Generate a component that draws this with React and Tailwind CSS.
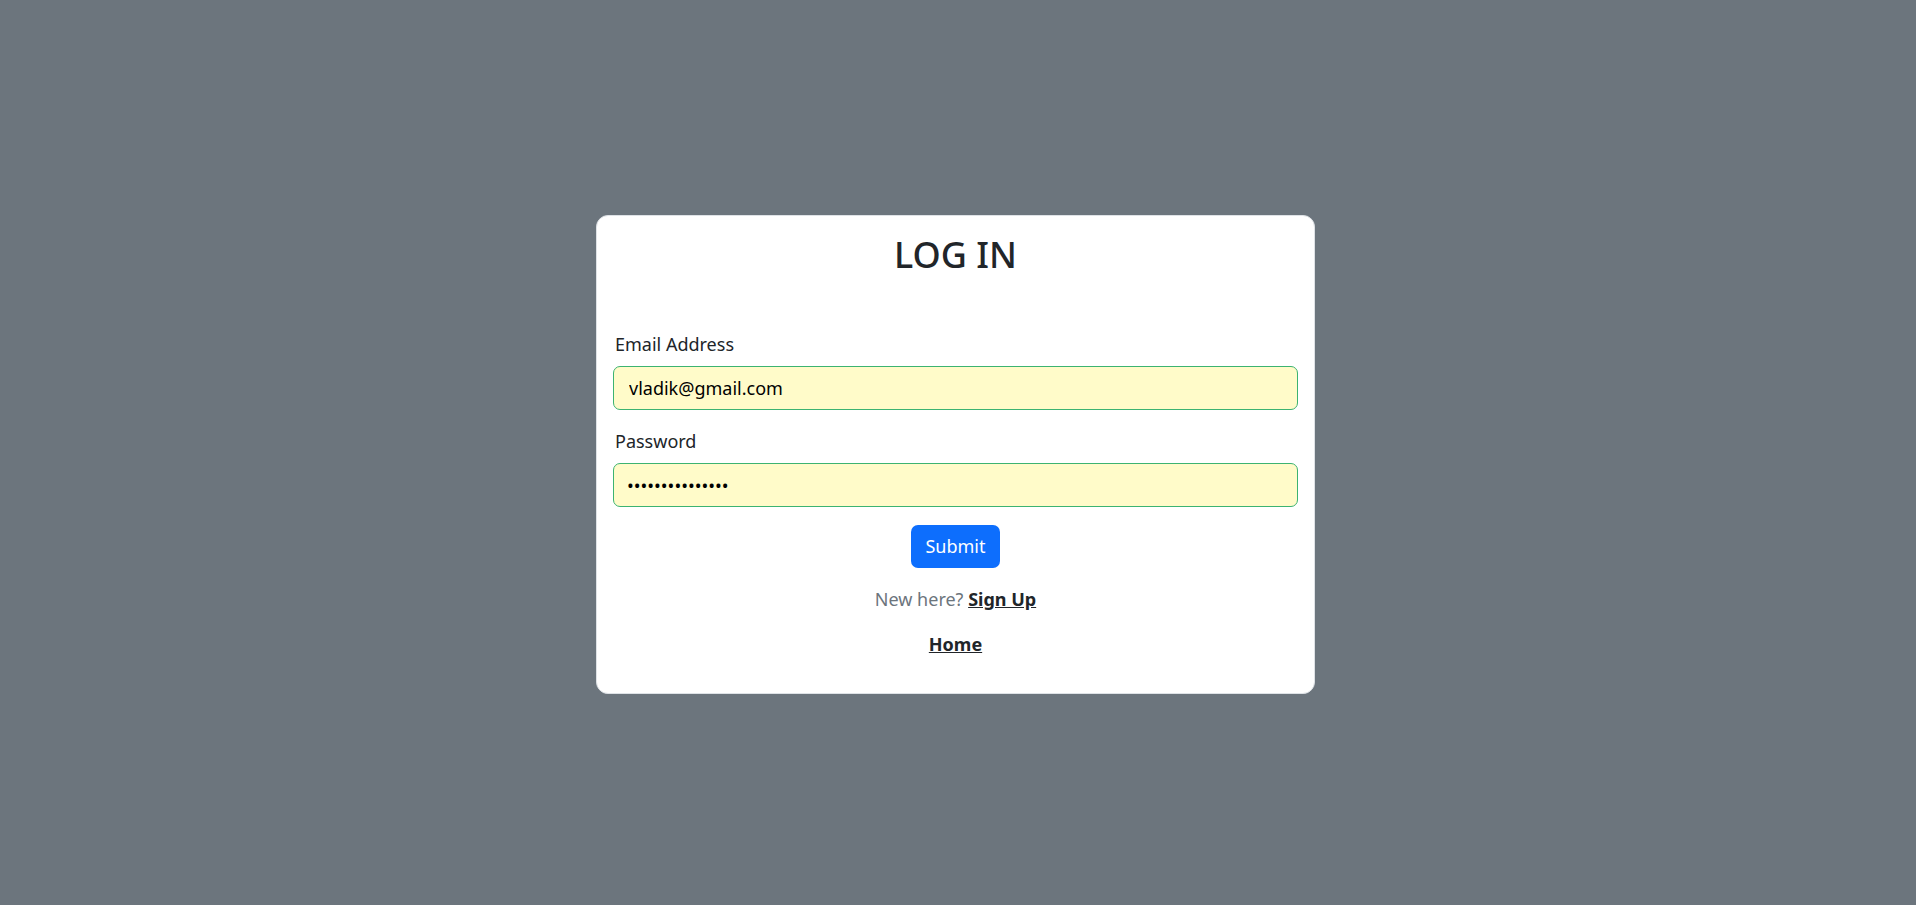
import React, { useState } from "react";

export default function App() {
  const [email, setEmail] = useState("vladik@gmail.com");
  const [password, setPassword] = useState("vladikpassword1");

  return (
    <div
      className="min-h-screen w-full bg-[#6c757d] flex items-center justify-center text-[#212529]"
      style={{ fontFamily: '"Noto Sans", "Open Sans", sans-serif' }}
    >
      <div className="w-[719px] mr-[5px] mt-[4px] bg-white rounded-[12px] border border-[#dee2e6] px-[16px] pt-[17px] pb-[17px]">
        <h2 className="text-center text-[36px] leading-[1.2] font-medium mb-[54px]">
          LOG IN
        </h2>

        <form onSubmit={(e) => e.preventDefault()}>
          <label htmlFor="email" className="block text-[18px] leading-[1.5] mb-[8px] pl-[2px]">
            Email Address
          </label>
          <input
            id="email"
            type="email"
            value={email}
            onChange={(e) => setEmail(e.target.value)}
            className="block w-full h-[44px] bg-[#fffbc9] border border-[#3cb371] rounded-[7px] pl-[15px] pr-3 text-[18px] text-black outline-none mb-[18px]"
          />

          <label htmlFor="password" className="block text-[18px] leading-[1.5] mb-[8px] pl-[2px]">
            Password
          </label>
          <input
            id="password"
            type="password"
            value={password}
            onChange={(e) => setPassword(e.target.value)}
            className="block w-full h-[44px] bg-[#fffbc9] border border-[#3cb371] rounded-[7px] pl-[13px] pr-3 text-[18px] text-black outline-none mb-[18px]"
          />

          <div className="flex justify-center mb-[18px]">
            <button
              type="submit"
              className="h-[43px] px-[14px] bg-[#0d6efd] text-white text-[18px] rounded-[7px]"
            >
              Submit
            </button>
          </div>
        </form>

        <p className="text-center text-[18px] leading-[1.5] text-[#6c757d] mb-[18px]">
          New here?{" "}
          <a href="#" className="font-bold text-[#212529] underline">
            Sign Up
          </a>
        </p>

        <p className="text-center text-[18px] leading-[1.5] mb-[18px]">
          <a href="#" className="font-bold text-[#212529] underline">
            Home
          </a>
        </p>
      </div>
    </div>
  );
}
